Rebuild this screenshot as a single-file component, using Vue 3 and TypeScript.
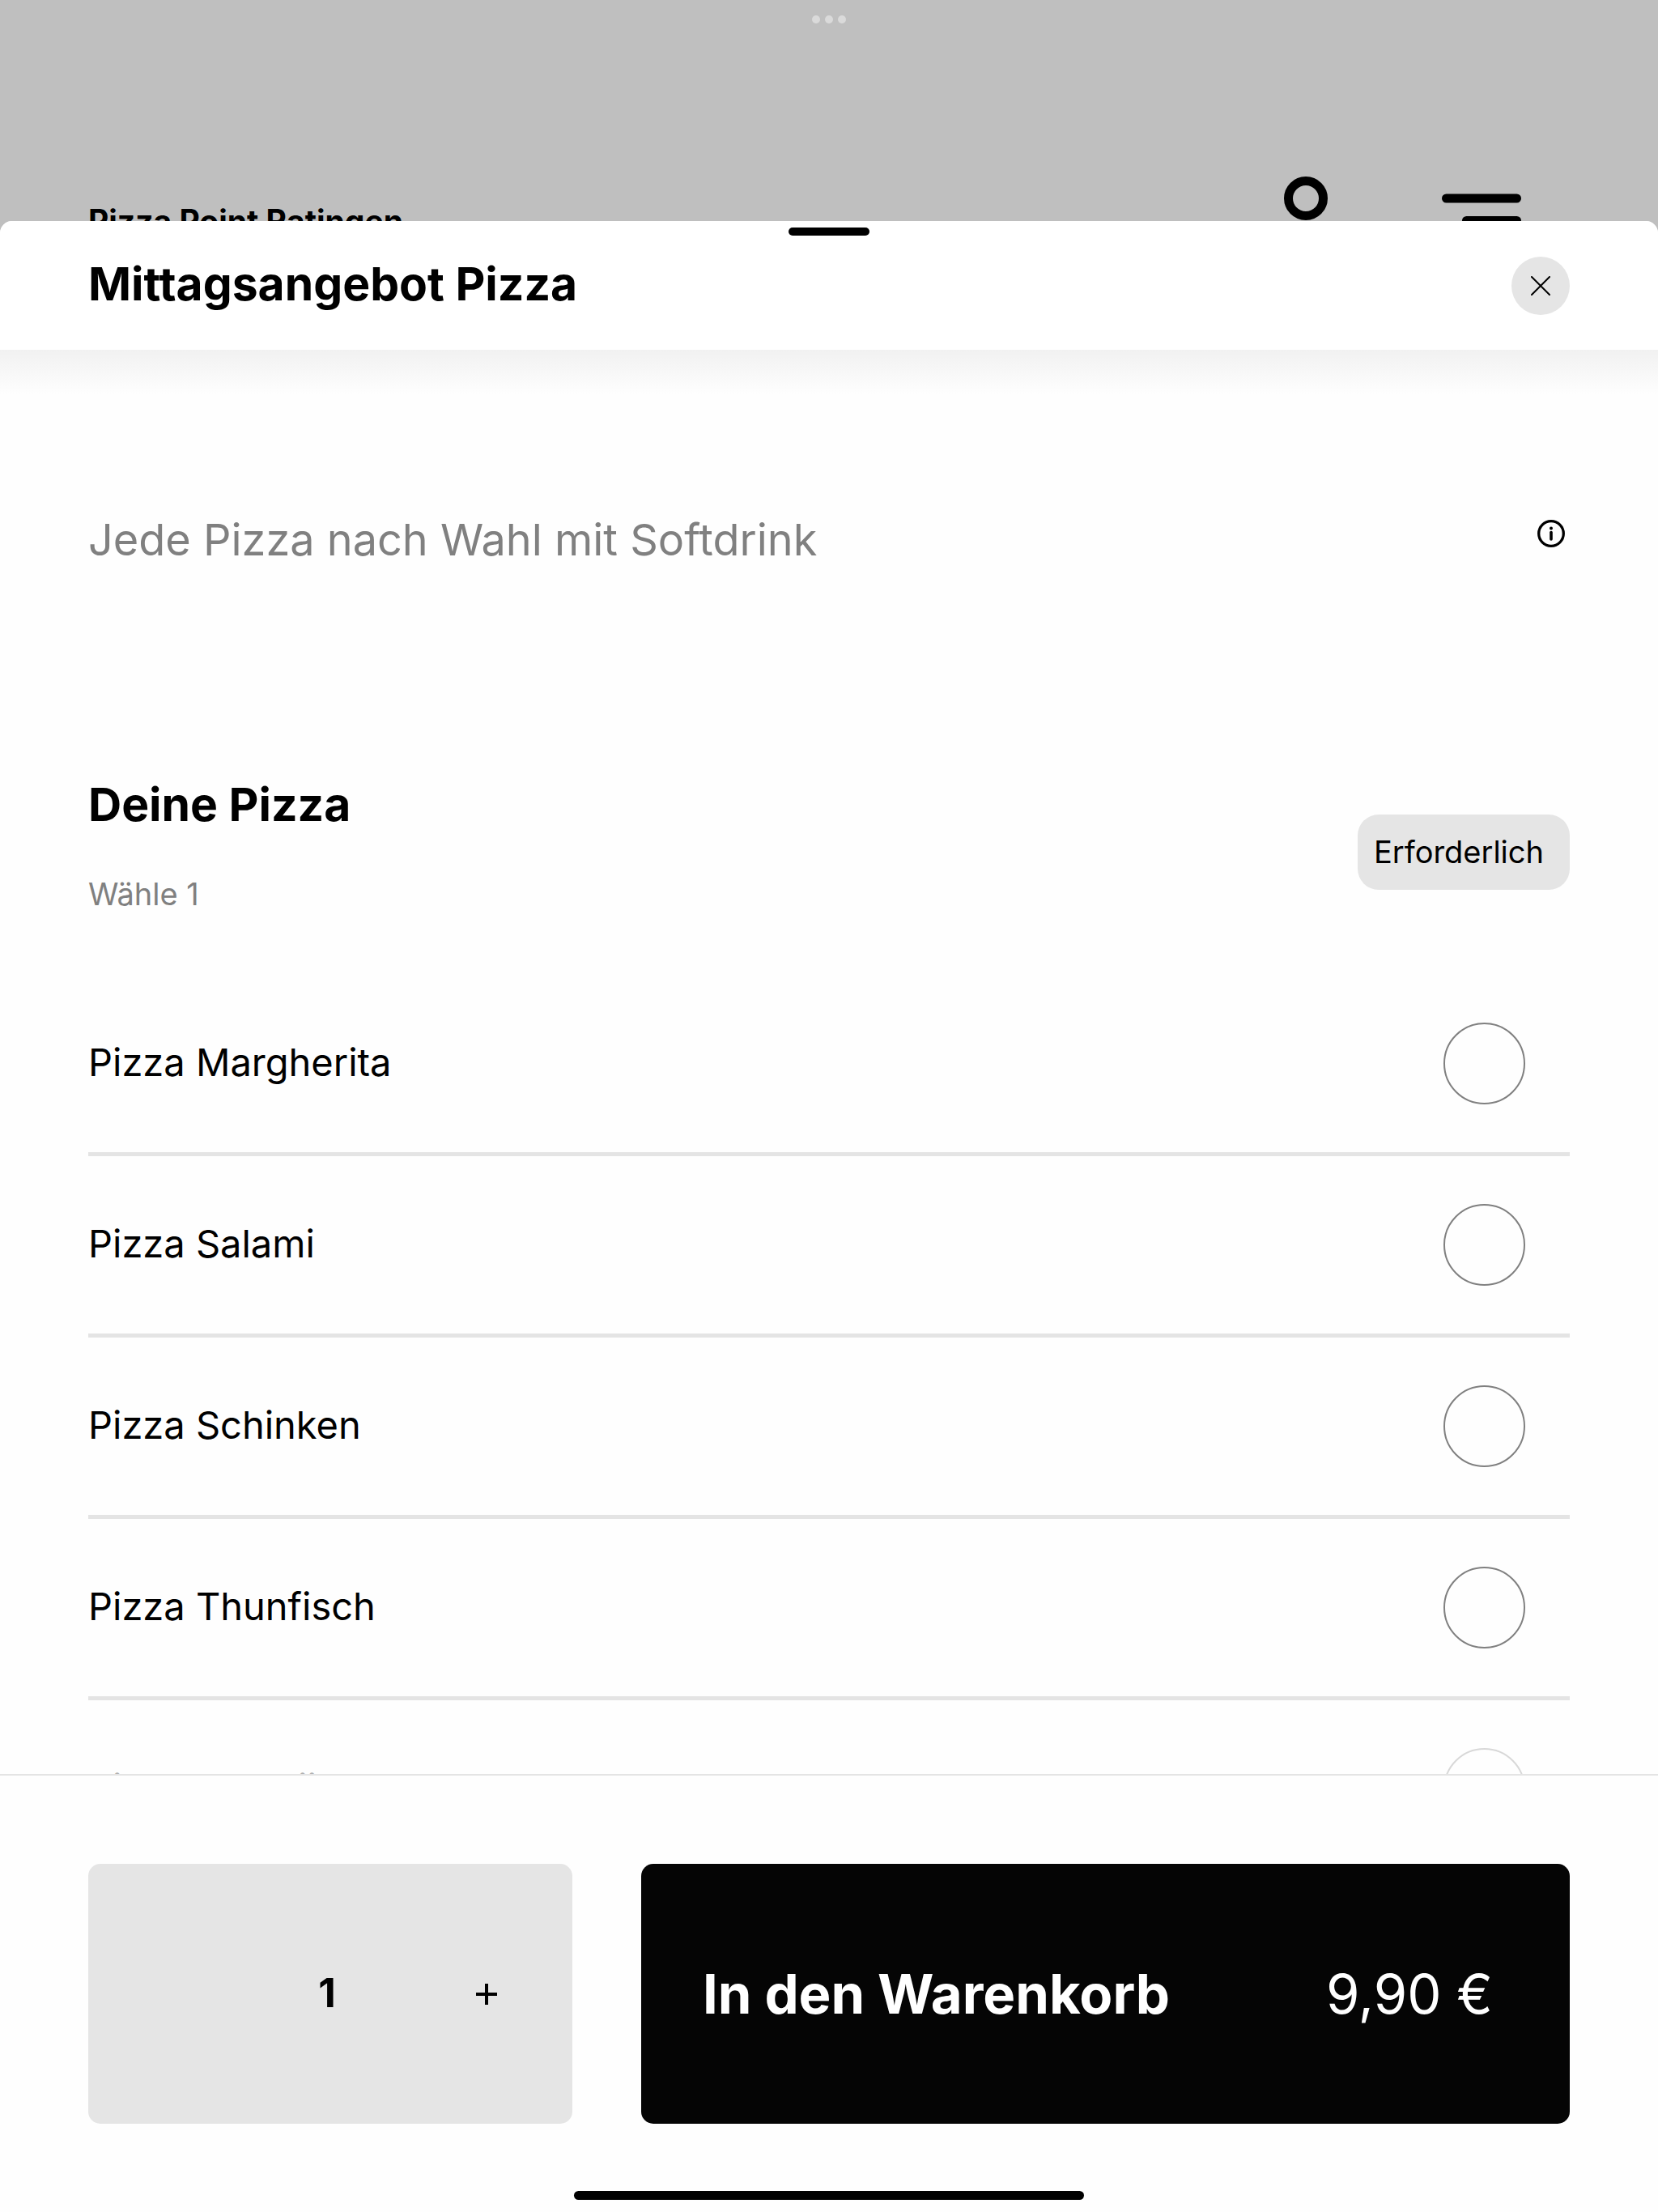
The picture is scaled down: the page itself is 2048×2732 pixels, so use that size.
<script setup lang="ts">
import { computed, ref } from 'vue'

interface PizzaOption {
  id: string
  name: string
  faded?: boolean
}

const options: PizzaOption[] = [
  { id: 'margherita', name: 'Pizza Margherita' },
  { id: 'salami', name: 'Pizza Salami' },
  { id: 'schinken', name: 'Pizza Schinken' },
  { id: 'thunfisch', name: 'Pizza Thunfisch' },
  { id: 'hawaii', name: 'Pizza Hawaii', faded: true },
]

const unitPrice = 9.9
const selected = ref<string | null>(null)
const quantity = ref(1)

const total = computed(
  () => (unitPrice * quantity.value).toFixed(2).replace('.', ',') + ' €',
)
</script>

<template>
  <div class="page">
    <header class="store">
      <div class="window-dots" aria-hidden="true"><i></i><i></i><i></i></div>
      <div class="store-name">Pizza Point Ratingen</div>
      <button class="store-button" type="button" aria-label="Konto">
        <svg width="110" height="116" viewBox="0 0 110 116" fill="none" stroke="#000" stroke-width="11">
          <circle cx="55" cy="29" r="21.5" />
          <path d="M12 108c0-24 18-38 43-38s43 14 43 38z" stroke-linejoin="round" />
        </svg>
      </button>
      <button class="store-button menu" type="button" aria-label="Menü">
        <svg width="98" height="116" viewBox="0 0 98 116" fill="#000">
          <rect x="0" y="23.5" width="98" height="11" rx="5.5" />
          <rect x="25" y="51" width="73" height="11" rx="5.5" />
          <rect x="0" y="78.5" width="98" height="11" rx="5.5" />
        </svg>
      </button>
    </header>

    <section class="sheet" role="dialog" aria-labelledby="sheet-title">
      <div class="grabber" aria-hidden="true"></div>
      <div class="sheet-header">
        <h1 id="sheet-title">Mittagsangebot Pizza</h1>
        <button class="close" type="button" aria-label="Schließen">
          <svg width="24" height="24" viewBox="0 0 24 24" fill="none" stroke="#000" stroke-width="2" stroke-linecap="round">
            <path d="M1 1l22 22M23 1L1 23" />
          </svg>
        </button>
      </div>

      <div class="content">
        <div class="intro">
          <p>Jede Pizza nach Wahl mit Softdrink</p>
          <button class="info" type="button" aria-label="Produktinfo">
            <svg width="34" height="34" viewBox="0 0 34 34" fill="none">
              <circle cx="17" cy="17" r="15.3" stroke="#000" stroke-width="3.3" />
              <circle cx="17" cy="10.4" r="2" fill="#000" />
              <path d="M17 15.6v8.4" stroke="#000" stroke-width="3.6" stroke-linecap="round" />
            </svg>
          </button>
        </div>

        <div class="group-header">
          <div>
            <h2 id="group-title">Deine Pizza</h2>
            <p>Wähle 1</p>
          </div>
          <span class="badge">Erforderlich</span>
        </div>

        <div class="options" role="radiogroup" aria-labelledby="group-title">
          <label v-for="option in options" :key="option.id" class="option" :class="{ faded: option.faded }">
            <span>{{ option.name }}</span>
            <input v-model="selected" type="radio" name="pizza" :value="option.id" />
          </label>
        </div>
      </div>

      <footer class="footer">
        <div class="actions">
          <div class="stepper">
            <output class="count">{{ quantity }}</output>
            <button class="plus" type="button" aria-label="Anzahl erhöhen" @click="quantity++">
              <svg width="28" height="28" viewBox="0 0 28 28" stroke="#000" stroke-width="4">
                <path d="M14 1v26M1 14h26" />
              </svg>
            </button>
          </div>
          <button class="add" type="button">
            <strong>In den Warenkorb</strong>
            <span>{{ total }}</span>
          </button>
        </div>
        <div class="home-indicator" aria-hidden="true"></div>
      </footer>
    </section>
  </div>
</template>

<style>
body {
  margin: 0;
}
</style>

<style scoped>
.page {
  height: 100vh;
  display: flex;
  flex-direction: column;
  overflow: hidden;
  background: #bfbfbf;
  color: #000;
  font-family: Inter, "Liberation Sans", sans-serif;
}

.page * {
  box-sizing: border-box;
}

h1,
h2,
p {
  margin: 0;
}

button {
  margin: 0;
  padding: 0;
  border: 0;
  background: none;
  color: inherit;
  font: inherit;
  cursor: pointer;
}

svg {
  display: block;
}

.store {
  position: relative;
  flex: none;
  height: 273px;
  padding: 216px 109px 0;
  display: flex;
  align-items: flex-start;
}

.store-name {
  flex: 1;
  font-size: 39px;
  font-weight: 700;
  line-height: 114px;
  white-space: nowrap;
}

.store-button {
  flex: none;
}

.menu {
  margin: 0 60px 0 113px;
}

.window-dots {
  position: absolute;
  top: 19px;
  left: 0;
  right: 0;
  display: flex;
  justify-content: center;
  gap: 6px;
}

.window-dots i {
  width: 10px;
  height: 10px;
  border-radius: 50%;
  background: #dadada;
}

.sheet {
  position: relative;
  flex: 1;
  min-height: 0;
  display: flex;
  flex-direction: column;
  overflow: hidden;
  border-radius: 15px 15px 0 0;
  background: #fefefe;
}

.grabber {
  position: absolute;
  top: 8px;
  left: calc(50% - 50px);
  width: 100px;
  height: 10px;
  border-radius: 5px;
  background: #000;
}

.sheet-header {
  flex: none;
  height: 159px;
  padding: 0 109px;
  display: flex;
  align-items: center;
  justify-content: space-between;
  background: #fff;
}

h1,
h2 {
  font-size: 57px;
  font-weight: 700;
  line-height: 62px;
}

h1 {
  padding-bottom: 4px;
}

.close {
  width: 72px;
  height: 72px;
  display: grid;
  place-items: center;
  border-radius: 50%;
  background: #e5e5e5;
}

.content {
  flex: 1;
  min-height: 0;
  overflow: hidden;
  padding: 198px 109px 0;
  background: linear-gradient(#f1f1f1, #fefefe) top / 100% 55px no-repeat;
}

.intro {
  display: flex;
  align-items: flex-start;
  justify-content: space-between;
  color: #808080;
  font-size: 54px;
  line-height: 74px;
}

.info {
  width: 46px;
  height: 58px;
  display: grid;
  place-items: center;
}

.group-header {
  margin: 259px 0 62px;
  display: flex;
  align-items: center;
  justify-content: space-between;
}

.group-header p {
  margin-top: 41px;
  color: #808080;
  font-size: 38px;
  line-height: 76px;
}

.badge {
  padding: 0 32px 0 20px;
  border-radius: 26px;
  background: #e5e5e5;
  font-size: 38px;
  line-height: 93px;
}

.option {
  height: 224px;
  padding-right: 55px;
  display: flex;
  align-items: center;
  justify-content: space-between;
  border-bottom: 5px solid #e4e4e4;
  font-size: 47px;
  line-height: 60px;
  cursor: pointer;
}

.option span,
.count {
  padding-bottom: 4px;
}

.option input {
  appearance: none;
  width: 101px;
  height: 101px;
  margin: 0;
  border: 2px solid #808080;
  border-radius: 50%;
}

.option input:checked {
  border: 30px solid #000;
}

.faded > * {
  opacity: 0.3;
}

.footer {
  flex: none;
  padding: 109px 109px 15px;
  border-top: 2px solid #e4e4e4;
}

.actions {
  display: grid;
  grid-template-columns: minmax(0, 598fr) minmax(0, 1147fr);
  gap: 85px;
}

.stepper,
.add {
  height: 321px;
  border-radius: 15px;
}

.stepper {
  padding-right: 8px;
  display: grid;
  grid-template-columns: repeat(3, 1fr);
  align-items: center;
  background: #e5e5e5;
}

.count {
  grid-column: 2;
  text-align: center;
  font-size: 50px;
  font-weight: 700;
  line-height: 60px;
}

.plus {
  height: 100%;
  display: grid;
  place-items: center;
}

.add {
  padding: 0 95px 0 76px;
  display: flex;
  align-items: center;
  justify-content: space-between;
  background: #050505;
  color: #fff;
  font-size: 67px;
  line-height: 80px;
  white-space: nowrap;
}

.home-indicator {
  width: 630px;
  height: 11px;
  margin: 83px auto 0;
  border-radius: 6px;
  background: #000;
}
</style>
